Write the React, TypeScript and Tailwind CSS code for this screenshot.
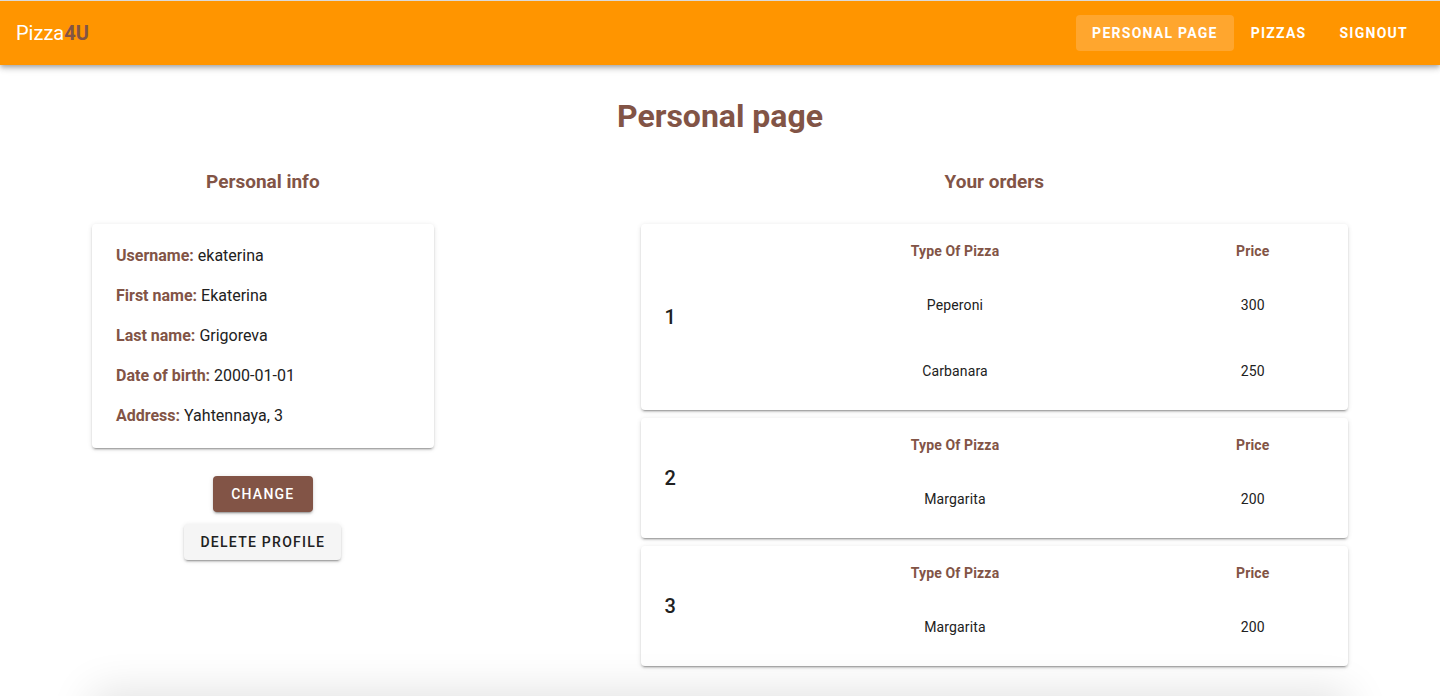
import React from "react";

const elevation2 =
  "shadow-[0_3px_1px_-2px_rgba(0,0,0,0.2),0_2px_2px_0_rgba(0,0,0,0.14),0_1px_5px_0_rgba(0,0,0,0.12)]";

const profile = [
  { label: "Username", value: "ekaterina" },
  { label: "First name", value: "Ekaterina" },
  { label: "Last name", value: "Grigoreva" },
  { label: "Date of birth", value: "2000-01-01" },
  { label: "Address", value: "Yahtennaya, 3" },
];

const orders = [
  {
    id: 1,
    pizzas: [
      { name: "Peperoni", price: 300 },
      { name: "Carbanara", price: 250 },
    ],
  },
  { id: 2, pizzas: [{ name: "Margarita", price: 200 }] },
  { id: 3, pizzas: [{ name: "Margarita", price: 200 }] },
];

const links = [
  { label: "Personal page", active: true },
  { label: "Pizzas", active: false },
  { label: "Signout", active: false },
];

function NavBar() {
  return (
    <header className="flex items-center justify-between border-t border-[#dadada] bg-[#ff9500] px-4 h-[65px] shadow-[0_2px_4px_-1px_rgba(0,0,0,0.2),0_4px_5px_0_rgba(0,0,0,0.14),0_1px_10px_0_rgba(0,0,0,0.12)]">
      <a href="#home" className="text-xl text-white">
        Pizza<span className="font-bold text-[#825446]">4U</span>
      </a>
      <nav className="flex gap-px">
        {links.map((link) => (
          <a
            key={link.label}
            href="#nav"
            aria-current={link.active ? "page" : undefined}
            className={`flex h-9 items-center rounded px-4 text-sm font-bold uppercase tracking-[0.09em] text-white ${
              link.active ? "bg-[#ffa62e]" : ""
            }`}
          >
            {link.label}
          </a>
        ))}
      </nav>
    </header>
  );
}

function PersonalInfo() {
  return (
    <section className="col-span-2 px-3">
      <h2 className="text-center text-[19px] leading-7 font-bold text-[#825446]">Personal info</h2>
      <dl className={`mt-7 rounded bg-white px-6 py-3 ${elevation2}`}>
        {profile.map((item) => (
          <div key={item.label} className="flex h-10 items-center gap-1">
            <dt className="font-bold text-[#825446]">{item.label}:</dt>
            <dd>{item.value}</dd>
          </div>
        ))}
      </dl>
      <div className="mt-7 flex flex-col items-center gap-3">
        <button
          type="button"
          className={`h-9 min-w-[100px] rounded bg-[#825446] px-4 text-sm font-medium uppercase tracking-[0.09em] text-white ${elevation2}`}
        >
          Change
        </button>
        <button
          type="button"
          className={`h-9 min-w-[100px] rounded bg-[#f5f5f5] px-4 text-sm font-medium uppercase tracking-[0.09em] ${elevation2}`}
        >
          Delete profile
        </button>
      </div>
    </section>
  );
}

function Orders() {
  return (
    <section className="col-span-4 col-start-4 px-3">
      <h2 className="text-center text-[19px] leading-7 font-bold text-[#825446]">Your orders</h2>
      <div className="mt-7 flex flex-col gap-2">
        {orders.map((order) => (
          <article
            key={order.id}
            className={`flex items-center rounded bg-white py-[6px] ${elevation2}`}
          >
            <h3 className="w-28 shrink-0 pl-6 text-xl font-medium">{order.id}</h3>
            <table className="w-full table-fixed text-center text-sm tracking-[0.01em]">
              <thead>
                <tr className="h-[42px] text-[#825446]">
                  <th className="w-[68%] font-bold">Type Of Pizza</th>
                  <th className="font-bold">Price</th>
                </tr>
              </thead>
              <tbody>
                {order.pizzas.map((pizza) => (
                  <tr key={pizza.name} className="h-[66px]">
                    <td>{pizza.name}</td>
                    <td>{pizza.price}</td>
                  </tr>
                ))}
              </tbody>
            </table>
          </article>
        ))}
      </div>
    </section>
  );
}

export default function App() {
  return (
    <div className="min-h-screen bg-white font-[Roboto,sans-serif] text-[#212121]">
      <NavBar />
      <main className="px-20 pt-7">
        <h1 className="text-center text-[32px] leading-[46px] font-bold text-[#825446]">
          Personal page
        </h1>
        <div className="mt-[29px] grid grid-cols-7 pb-7">
          <PersonalInfo />
          <Orders />
        </div>
      </main>
      <div className="pointer-events-none fixed inset-x-24 top-full h-20 shadow-[0_0_44px_4px_rgba(0,0,0,0.12)]" />
    </div>
  );
}
